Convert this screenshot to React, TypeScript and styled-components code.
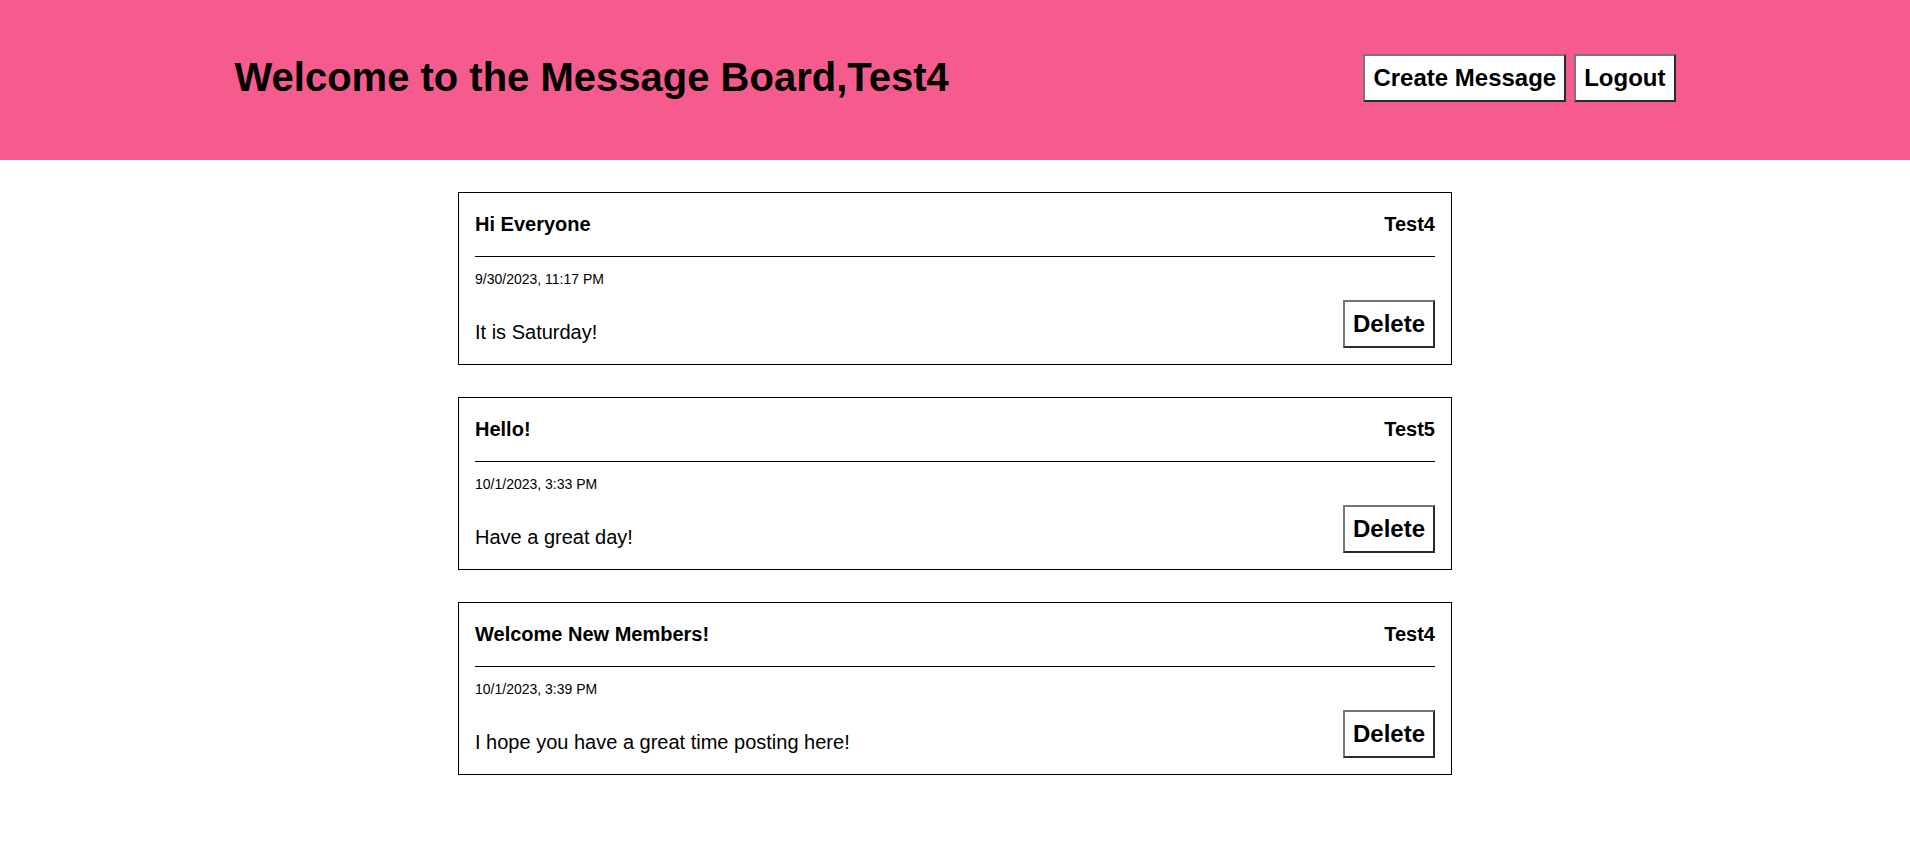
import React from "react";
import styled, { createGlobalStyle } from "styled-components";

const GlobalStyle = createGlobalStyle`
  html, body {
    margin: 0;
    padding: 0;
    background: #ffffff;
    font-family: "Liberation Sans", Arial, sans-serif;
    color: #000000;
  }
  * { box-sizing: border-box; }
`;

const Header = styled.header`
  height: 160px;
  padding-bottom: 5px;
  background: #f55c8d;
`;

const HeaderInner = styled.div`
  max-width: 1441px;
  height: 100%;
  margin: 0 auto;
  display: flex;
  align-items: center;
  justify-content: space-between;
`;

const Title = styled.h1`
  margin: 0;
  font-size: 40px;
  font-weight: 700;
`;

const Actions = styled.div`
  display: flex;
  gap: 8px;
`;

const Button = styled.button`
  font-family: "Liberation Sans", Arial, sans-serif;
  font-size: 24px;
  font-weight: 700;
  color: #000000;
  background: #ffffff;
  padding: 8px;
  border-width: 2px;
  border-style: solid;
  border-color: #767676 #2b2b2b #2b2b2b #767676;
  border-radius: 0;
  cursor: pointer;
`;

const Main = styled.main`
  display: flex;
  flex-direction: column;
  align-items: center;
  gap: 32px;
  padding: 32px 0;
`;

const Card = styled.article`
  width: 994px;
  border: 1px solid #000000;
  padding: 16px;
`;

const CardHead = styled.div`
  margin-top: 4px;
  padding-bottom: 20px;
  border-bottom: 1px solid #000000;
  display: flex;
  justify-content: space-between;
  align-items: baseline;
`;

const CardTitle = styled.h3`
  margin: 0;
  font-size: 20px;
  font-weight: 700;
`;

const Author = styled.span`
  font-size: 20px;
  font-weight: 700;
`;

const Stamp = styled.div`
  margin-top: 14px;
  font-size: 14px;
  line-height: 16px;
`;

const CardFoot = styled.div`
  margin-top: 13px;
  display: flex;
  justify-content: space-between;
  align-items: flex-end;
`;

const Body = styled.p`
  margin: 0 0 4px;
  font-size: 20px;
`;

const messages = [
  { title: "Hi Everyone", author: "Test4", date: "9/30/2023, 11:17 PM", body: "It is Saturday!" },
  { title: "Hello!", author: "Test5", date: "10/1/2023, 3:33 PM", body: "Have a great day!" },
  {
    title: "Welcome New Members!",
    author: "Test4",
    date: "10/1/2023, 3:39 PM",
    body: "I hope you have a great time posting here!",
  },
];

export default function App() {
  return (
    <>
      <GlobalStyle />
      <Header>
        <HeaderInner>
          <Title>Welcome to the Message Board,Test4</Title>
          <Actions>
            <Button>Create Message</Button>
            <Button>Logout</Button>
          </Actions>
        </HeaderInner>
      </Header>
      <Main>
        {messages.map((m, i) => (
          <Card key={i}>
            <CardHead>
              <CardTitle>{m.title}</CardTitle>
              <Author>{m.author}</Author>
            </CardHead>
            <Stamp>{m.date}</Stamp>
            <CardFoot>
              <Body>{m.body}</Body>
              <Button>Delete</Button>
            </CardFoot>
          </Card>
        ))}
      </Main>
    </>
  );
}
